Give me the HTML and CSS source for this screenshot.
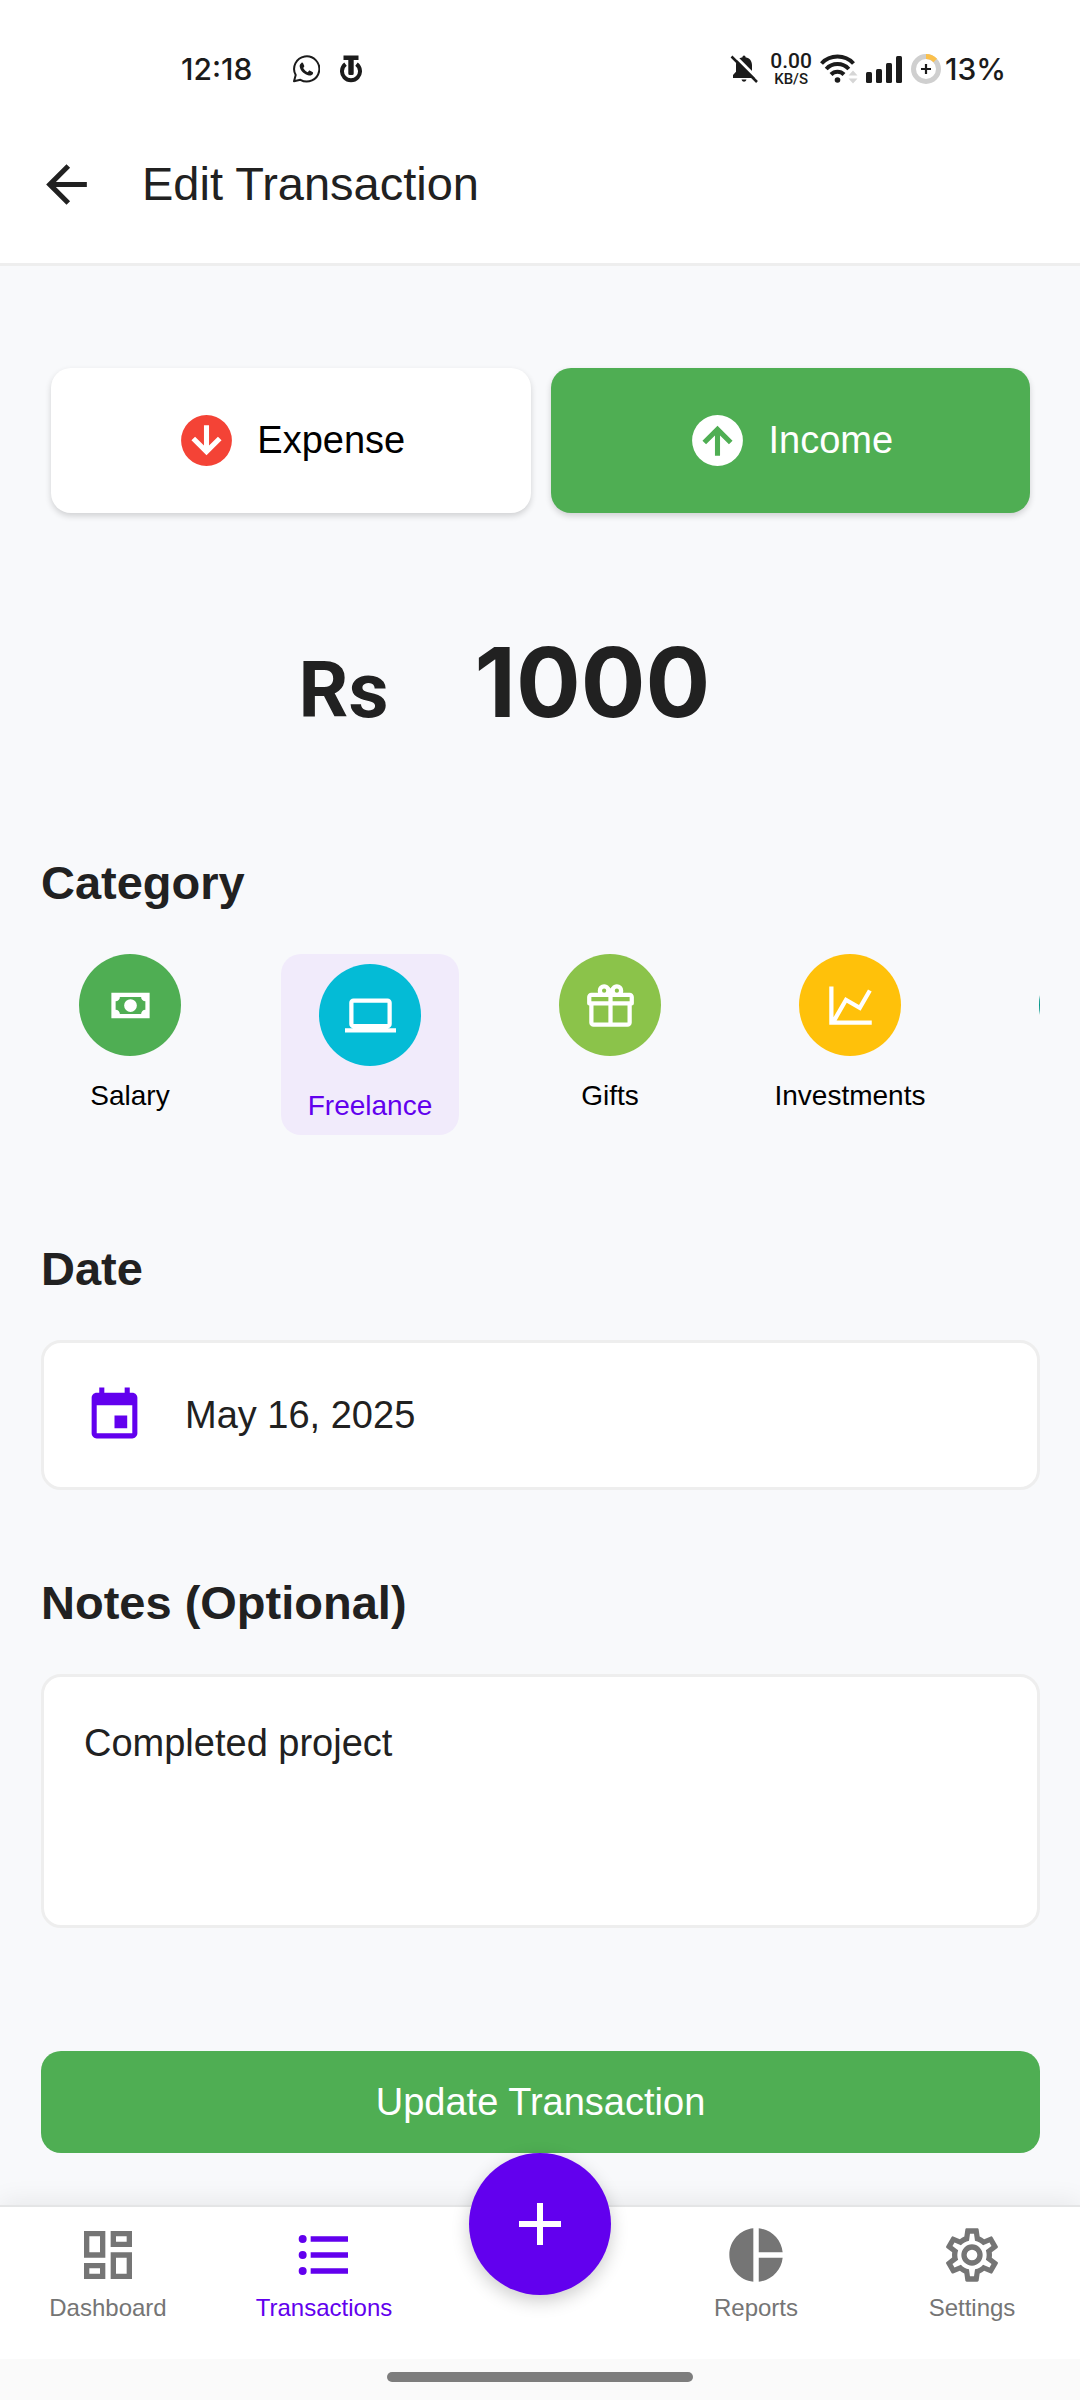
FILE: index.html
```html
<!DOCTYPE html>
<html lang="en">
<head>
<meta charset="utf-8">
<meta name="viewport" content="width=device-width, initial-scale=1">
<title>Edit Transaction</title>
<link rel="stylesheet" href="styles.css">
</head>
<body>
<div class="status">
  <span class="status-text">12:18</span>
  <div class="status-apps">
    <svg width="28" height="28" viewBox="0 0 28 28" aria-hidden="true">
      <path d="M2 26.2 3.7 20A12.6 12.6 0 1 1 8.4 24.8Z" fill="none" stroke="#1b1b1b" stroke-width="2" stroke-linejoin="round"/>
      <path d="M9.4 7.900c.5-.5 1.400-.4 1.700.3l1.100 2.500c.2.5.1.900-.2 1.300l-.8 1c1 1.900 2.500 3.300 4.500 4.200l1.100-1.200c.3-.4.8-.5 1.300-.3l2.400 1.200c.6.3.7.9.5 1.500-.6 1.600-2.300 2.400-4 2.100-4.700-.9-8.800-4.800-9.300-9-.2-1.400.6-2.700 1.700-3.600Z" fill="#1b1b1b"/>
    </svg>
    <svg width="22" height="28" viewBox="0 0 22 28" aria-hidden="true">
      <path d="M5.500 9.200A9 9 0 1 0 16.500 9.200" fill="none" stroke="#1b1b1b" stroke-width="4"/>
      <path d="M3.500.5h15v4.500h-15zM8.300 4h5.400v14.500a1.500 1.500 0 0 1-1.500 1.500H9.800a1.500 1.500 0 0 1-1.500-1.500z" fill="#1b1b1b"/>
    </svg>
  </div>
  <div class="status-system">
    <svg width="32" height="28" viewBox="0 0 32 28" aria-hidden="true">
      <path d="M14 .5c1 0 1.500.8 1.500 1.700 4.500.8 6.500 4 6.500 8v6.500l3 3.300v3H3v-3l3-3.300V10c0-4 2-7 6.500-7.800 0-.9.5-1.700 1.500-1.700ZM11.500 24.500h5c-.5 1.500-1.500 2.200-2.500 2.200s-2-.7-2.500-2.200Z" fill="#1b1b1b"/>
      <path d="M3.500-.5 29.500 25.500" stroke="#fff" stroke-width="3"/>
      <path d="M1.500 1.500 27 27" stroke="#1b1b1b" stroke-width="2.500"/>
    </svg>
    <div class="net-speed"><span class="net-value">0.00</span><span class="net-unit">KB/S</span></div>
    <svg width="38" height="30" viewBox="0 0 38 30" aria-hidden="true">
      <g fill="none" stroke="#1b1b1b" stroke-width="4">
        <path d="M1.500 9.500a22 22 0 0 1 32 0"/>
        <path d="M6.200 15a15.500 15.500 0 0 1 22.600 0"/>
        <path d="M11 20.500a9 9 0 0 1 13 0"/>
      </g>
      <circle cx="17.500" cy="26" r="2.800" fill="#1b1b1b"/>
      <path d="m33 16.500 4.500 5h-9zM28.500 24.500h9l-4.500 5z" fill="#d6d6d6"/>
    </svg>
    <svg width="37" height="28" viewBox="0 0 37 28" aria-hidden="true">
      <g fill="#1b1b1b">
        <rect x="0" y="17" width="6" height="11" rx="1.500"/>
        <rect x="10" y="14" width="6" height="14" rx="1.500"/>
        <rect x="20" y="8" width="6" height="20" rx="1.500"/>
        <rect x="30" y="1" width="6" height="27" rx="1.500"/>
      </g>
    </svg>
    <svg width="30" height="30" viewBox="0 0 30 30" aria-hidden="true">
      <circle cx="15" cy="15" r="12.500" fill="none" stroke="#cfcfcf" stroke-width="5"/>
      <path d="M15 2.500a12.500 12.500 0 0 1 9.200 4" fill="none" stroke="#fbc04b" stroke-width="5"/>
      <path d="M15 10v10M10 15h10" stroke="#1b1b1b" stroke-width="2.200"/>
    </svg>
    <span class="status-text">13%</span>
  </div>
</div>

<header class="app-bar">
  <button class="back" type="button" aria-label="Back">
    <svg class="icon" viewBox="0 0 24 24" fill="currentColor" aria-hidden="true"><path d="M20 11H7.830l5.590-5.590L12 4l-8 8 8 8 1.410-1.410L7.830 13H20v-2z"/></svg>
  </button>
  <h1 class="title">Edit Transaction</h1>
</header>

<main class="content">
  <div class="types" role="group" aria-label="Type">
    <button class="type type-expense" type="button" aria-pressed="false">
      <svg class="icon" viewBox="0 0 24 24" fill="currentColor" aria-hidden="true"><path d="M12,2A10,10 0 0,1 22,12A10,10 0 0,1 12,22A10,10 0 0,1 2,12A10,10 0 0,1 12,2M11,6V14L7.500,10.500L6.080,11.920L12,17.840L17.920,11.920L16.500,10.500L13,14V6H11Z"/></svg>
      <span class="type-name">Expense</span>
    </button>
    <button class="type type-income" type="button" aria-pressed="true">
      <svg class="icon" viewBox="0 0 24 24" fill="currentColor" aria-hidden="true"><path d="M12,22A10,10 0 0,1 2,12A10,10 0 0,1 12,2A10,10 0 0,1 22,12A10,10 0 0,1 12,22M13,18V10L16.500,13.500L17.920,12.080L12,6.160L6.080,12.080L7.500,13.500L11,10V18H13Z"/></svg>
      <span class="type-name">Income</span>
    </button>
  </div>

  <div class="amount">
    <label class="currency" for="amount">Rs</label>
    <input class="amount-input" id="amount" type="text" inputmode="decimal" value="1000">
  </div>

  <section class="section">
    <h2 class="heading" id="category-heading">Category</h2>
    <div class="categories" role="group" aria-labelledby="category-heading">
      <button class="category" type="button" aria-pressed="false">
        <span class="disc disc-green"><svg class="icon-small" viewBox="0 0 24 24" aria-hidden="true"><path d="M3,6H21V18H3V6M12,9A3,3 0 0,1 15,12A3,3 0 0,1 12,15A3,3 0 0,1 9,12A3,3 0 0,1 12,9M7,8A2,2 0 0,1 5,10V14A2,2 0 0,1 7,16H17A2,2 0 0,1 19,14V10A2,2 0 0,1 17,8H7Z"/></svg></span>
        <span class="category-name">Salary</span>
      </button>
      <button class="category category-selected" type="button" aria-pressed="true">
        <span class="disc disc-cyan"><svg class="icon-small" viewBox="0 0 24 24" aria-hidden="true"><path d="M4,6H20V16H4M20,18A2,2 0 0,0 22,16V6C22,4.890 21.100,4 20,4H4C2.890,4 2,4.890 2,6V16A2,2 0 0,0 4,18H0V20H24V18H20Z"/></svg></span>
        <span class="category-name">Freelance</span>
      </button>
      <button class="category" type="button" aria-pressed="false">
        <span class="disc disc-lime"><svg class="icon-small" viewBox="0 0 24 24" aria-hidden="true"><path d="M22,12V20A2,2 0 0,1 20,22H4A2,2 0 0,1 2,20V12A1,1 0 0,1 1,11V8A2,2 0 0,1 3,6H6.170C6.060,5.690 6,5.350 6,5A3,3 0 0,1 9,2C10,2 10.880,2.500 11.430,3.240V3.230L12,4L12.570,3.230V3.240C13.120,2.500 14,2 15,2A3,3 0 0,1 18,5C18,5.350 17.940,5.690 17.830,6H21A2,2 0 0,1 23,8V11A1,1 0 0,1 22,12M4,20H11V12H4V20M20,20V12H13V20H20M9,4A1,1 0 0,0 8,5A1,1 0 0,0 9,6A1,1 0 0,0 10,5A1,1 0 0,0 9,4M15,4A1,1 0 0,0 14,5A1,1 0 0,0 15,6A1,1 0 0,0 16,5A1,1 0 0,0 15,4M3,8V10H11V8H3M13,8V10H21V8H13Z"/></svg></span>
        <span class="category-name">Gifts</span>
      </button>
      <button class="category" type="button" aria-pressed="false">
        <span class="disc disc-amber"><svg class="icon-small" viewBox="0 0 24 24" aria-hidden="true"><path d="M16,11.780L20.240,4.450L21.970,5.450L16.740,14.500L10.230,10.750L5.460,19H22V21H2V3H4V17.540L9.500,8L16,11.780Z"/></svg></span>
        <span class="category-name">Investments</span>
      </button>
      <button class="category" type="button" aria-pressed="false" aria-label="Other">
        <span class="disc disc-teal"></span>
      </button>
    </div>
  </section>

  <section class="section section-date">
    <label class="heading" for="date">Date</label>
    <div class="date-field">
      <svg class="icon" viewBox="0 0 24 24" fill="currentColor" aria-hidden="true"><path d="M17 12h-5v5h5v-5zM16 1v2H8V1H6v2H5c-1.110 0-1.990.9-1.990 2L3 19c0 1.100.89 2 2 2h14c1.100 0 2-.9 2-2V5c0-1.100-.9-2-2-2h-1V1h-2zm3 18H5V8h14v11z"/></svg>
      <input class="date-input" id="date" type="text" value="May 16, 2025" readonly>
    </div>
  </section>

  <section class="section section-notes">
    <label class="heading" for="notes">Notes (Optional)</label>
    <textarea class="notes" id="notes" rows="4">Completed project</textarea>
  </section>

  <button class="submit" type="submit">Update Transaction</button>
</main>

<nav class="tabs" aria-label="Main">
  <a class="tab" href="#dashboard">
    <svg class="tab-icon" viewBox="0 0 24 24" aria-hidden="true"><path d="M19,5V7H15V5H19M9,5V11H5V5H9M19,13V19H15V13H19M9,17V19H5V17H9M21,3H13V9H21V3M11,3H3V13H11V3M21,11H13V21H21V11M11,15H3V21H11V15Z"/></svg>
    <span>Dashboard</span>
  </a>
  <a class="tab tab-active" href="#transactions" aria-current="page">
    <svg class="tab-icon" viewBox="0 0 24 24" aria-hidden="true"><path d="M7,5H21V7H7V5M7,13V11H21V13H7M4,4.500A1.500,1.500 0 0,1 5.500,6A1.500,1.500 0 0,1 4,7.500A1.500,1.500 0 0,1 2.500,6A1.500,1.500 0 0,1 4,4.500M4,10.500A1.500,1.500 0 0,1 5.500,12A1.500,1.500 0 0,1 4,13.500A1.500,1.500 0 0,1 2.500,12A1.500,1.500 0 0,1 4,10.500M7,19V17H21V19H7M4,16.500A1.500,1.500 0 0,1 5.500,18A1.500,1.500 0 0,1 4,19.500A1.500,1.500 0 0,1 2.500,18A1.500,1.500 0 0,1 4,16.500Z"/></svg>
    <span>Transactions</span>
  </a>
  <div class="tab-gap">
    <button class="fab" type="button" aria-label="Add">
      <svg class="fab-icon" viewBox="0 0 24 24" aria-hidden="true"><path d="M19 13h-6v6h-2v-6H5v-2h6V5h2v6h6v2z"/></svg>
    </button>
  </div>
  <a class="tab" href="#reports">
    <svg class="tab-icon" viewBox="0 0 24 24" aria-hidden="true"><path d="M11 2v20c-5.070-.5-9-4.790-9-10s3.930-9.500 9-10zm2.030 0v8.990H22c-.47-4.740-4.240-8.520-8.970-8.990zm0 11.010V22c4.740-.47 8.500-4.250 8.970-8.990h-8.970z"/></svg>
    <span>Reports</span>
  </a>
  <a class="tab" href="#settings">
    <svg class="tab-icon" viewBox="0 0 24 24" aria-hidden="true"><path d="M12,8A4,4 0 0,1 16,12A4,4 0 0,1 12,16A4,4 0 0,1 8,12A4,4 0 0,1 12,8M12,10A2,2 0 0,0 10,12A2,2 0 0,0 12,14A2,2 0 0,0 14,12A2,2 0 0,0 12,10M10,22C9.750,22 9.540,21.820 9.500,21.580L9.130,18.930C8.500,18.680 7.960,18.340 7.440,17.940L4.950,18.950C4.730,19.030 4.460,18.950 4.340,18.730L2.340,15.270C2.210,15.050 2.270,14.780 2.460,14.630L4.570,12.970L4.500,12L4.570,11L2.460,9.370C2.270,9.220 2.210,8.950 2.340,8.730L4.340,5.270C4.460,5.050 4.730,4.960 4.950,5.050L7.440,6.050C7.960,5.660 8.500,5.320 9.130,5.070L9.500,2.420C9.540,2.180 9.750,2 10,2H14C14.250,2 14.460,2.180 14.500,2.420L14.870,5.070C15.500,5.320 16.040,5.660 16.560,6.050L19.050,5.050C19.270,4.960 19.540,5.050 19.660,5.270L21.660,8.730C21.790,8.950 21.730,9.220 21.540,9.370L19.430,11L19.500,12L19.430,13L21.540,14.630C21.730,14.780 21.790,15.050 21.660,15.270L19.660,18.730C19.540,18.950 19.270,19.040 19.050,18.950L16.560,17.950C16.040,18.340 15.500,18.680 14.870,18.930L14.500,21.580C14.460,21.820 14.250,22 14,22H10M11.250,4L10.880,6.610C9.680,6.860 8.620,7.500 7.850,8.390L5.440,7.350L4.690,8.650L6.800,10.200C6.400,11.370 6.400,12.640 6.800,13.800L4.680,15.360L5.430,16.660L7.860,15.620C8.630,16.500 9.680,17.140 10.870,17.380L11.240,20H12.760L13.130,17.390C14.320,17.140 15.370,16.500 16.140,15.620L18.570,16.660L19.320,15.360L17.200,13.810C17.600,12.640 17.600,11.370 17.200,10.200L19.310,8.650L18.560,7.350L16.150,8.390C15.380,7.500 14.320,6.860 13.120,6.620L12.750,4H11.250Z"/></svg>
    <span>Settings</span>
  </a>
</nav>
<div class="gesture"><span class="gesture-bar"></span></div>
</body>
</html>
```
FILE: styles.css
```css
*, *::before, *::after { box-sizing: border-box; }

body {
  margin: 0;
  min-height: 100vh;
  display: flex;
  flex-direction: column;
  background: #f8f9fb;
  color: #212121;
  font-family: "Liberation Sans", Arial, sans-serif;
  font-size: 38px;
}

button, input, textarea { font: inherit; color: inherit; }
button { border: 0; padding: 0; background: none; cursor: pointer; }
svg { display: block; flex: none; }

.icon { width: 61px; height: 61px; }
.icon-small { width: 51px; height: 51px; fill: #fff; }

/* System status bar */
.status {
  display: flex;
  align-items: center;
  height: 105px;
  padding: 32px 74px 0 181px;
  background: #fff;
  color: #1b1b1b;
  font-family: Inter, "Liberation Sans", sans-serif;
  font-weight: 500;
  line-height: 36px;
}
.status-text { font-size: 30px; }
.status-apps { display: flex; align-items: center; gap: 20px; margin-left: 40px; }
.status-system { display: flex; align-items: center; gap: 8px; margin-left: auto; }
.status-system .status-text { margin-left: -4px; }
.net-speed {
  display: flex;
  flex-direction: column;
  align-items: center;
  font-family: Roboto, "Liberation Sans", sans-serif;
}
.net-value { font-size: 21px; line-height: 20px; }
.net-unit { font-size: 15px; line-height: 16px; }

/* App bar */
.app-bar {
  display: flex;
  align-items: center;
  gap: 45px;
  height: 161px;
  padding: 0 36px;
  background: #fff;
  border-bottom: 3px solid #eee;
}
.back { display: flex; }
.title { margin: 0; font-size: 47px; line-height: 56px; font-weight: 500; }

/* Form */
.content {
  flex: 1;
  display: flex;
  flex-direction: column;
  padding: 102px 40px 52px 41px;
}

.types { display: grid; grid-template-columns: 1fr 1fr; gap: 20px; padding: 0 10px; }
.type {
  display: flex;
  align-items: center;
  justify-content: center;
  gap: 20px;
  height: 145px;
  border-radius: 20px;
  font-weight: 500;
  box-shadow: 0 3px 6px rgba(0, 0, 0, .16);
}
.type-expense { background: #fff; color: #f44336; }
.type-expense .type-name { color: #000; }
.type-income { background: #4fae53; color: #fff; }

.amount {
  display: flex;
  align-items: baseline;
  justify-content: center;
  gap: 86px;
  margin: 111px 0 115px;
  font-weight: 700;
}
.currency {
  font-family: Roboto, "Liberation Sans", sans-serif;
  font-size: 78px;
  line-height: 92px;
}
.amount-input {
  width: 308px;
  height: 116px;
  padding: 0;
  border: 0;
  background: none;
  font-family: Inter, "Liberation Sans", sans-serif;
  font-size: 96px;
}

.section { display: flex; flex-direction: column; gap: 43px; margin-bottom: 106px; }
.section-date { margin-bottom: 85px; }
.section-notes { margin-bottom: 123px; }
.heading { margin: 0; font-size: 47px; line-height: 56px; font-weight: 700; }

.categories { display: flex; align-items: flex-start; gap: 62px; overflow: hidden; }
.category {
  flex: 0 0 178px;
  display: flex;
  flex-direction: column;
  align-items: center;
  gap: 21px;
  color: #000;
}
.category-selected {
  padding: 10px 0;
  border-radius: 20px;
  background: #f1ebfb;
  color: #6200ee;
  font-weight: 500;
}
.category-name { font-size: 28px; line-height: 38px; }
.disc {
  display: flex;
  align-items: center;
  justify-content: center;
  width: 102px;
  height: 102px;
  border-radius: 50%;
}
.disc-green { background: #4fae53; }
.disc-cyan { background: #04bbd6; }
.disc-lime { background: #8bc34a; }
.disc-amber { background: #ffc10a; }
.disc-teal { background: #009688; }

.date-field, .notes { border: 3px solid #eee; border-radius: 20px; background: #fff; }
.date-field {
  display: flex;
  align-items: center;
  gap: 40px;
  height: 150px;
  padding: 0 40px;
  color: #6200ee;
}
.date-input { flex: 1; min-width: 0; padding: 0; border: 0; background: none; color: #212121; }
.notes {
  display: block;
  width: 100%;
  height: 254px;
  padding: 42px 40px;
  line-height: 48px;
  resize: none;
}

.submit {
  height: 102px;
  border-radius: 20px;
  background: #4fae53;
  color: #fff;
  font-weight: 500;
}

/* Bottom navigation */
.tabs {
  display: grid;
  grid-template-columns: repeat(5, 1fr);
  height: 154px;
  background: #fff;
  border-top: 2px solid #e4e5e6;
  box-shadow: 0 -4px 24px rgba(0, 0, 0, .07);
}
.tab {
  display: flex;
  flex-direction: column;
  align-items: center;
  gap: 7px;
  padding-top: 16px;
  color: #757575;
  font-size: 24px;
  line-height: 28px;
  font-weight: 500;
  text-decoration: none;
}
.tab-active { color: #6200ee; }
.tab-icon { width: 64px; height: 64px; fill: currentColor; }
.tab-gap { position: relative; display: flex; justify-content: center; }
.fab {
  position: absolute;
  top: -54px;
  display: flex;
  align-items: center;
  justify-content: center;
  width: 142px;
  height: 142px;
  border-radius: 50%;
  background: #6200ee;
  box-shadow: 0 6px 18px rgba(0, 0, 0, .2);
}
.fab-icon { width: 72px; height: 72px; fill: #fff; }

.gesture { display: flex; justify-content: center; height: 41px; padding-top: 13px; background: #fafafa; }
.gesture-bar { width: 306px; height: 10px; border-radius: 5px; background: #7d7d7d; }
```
